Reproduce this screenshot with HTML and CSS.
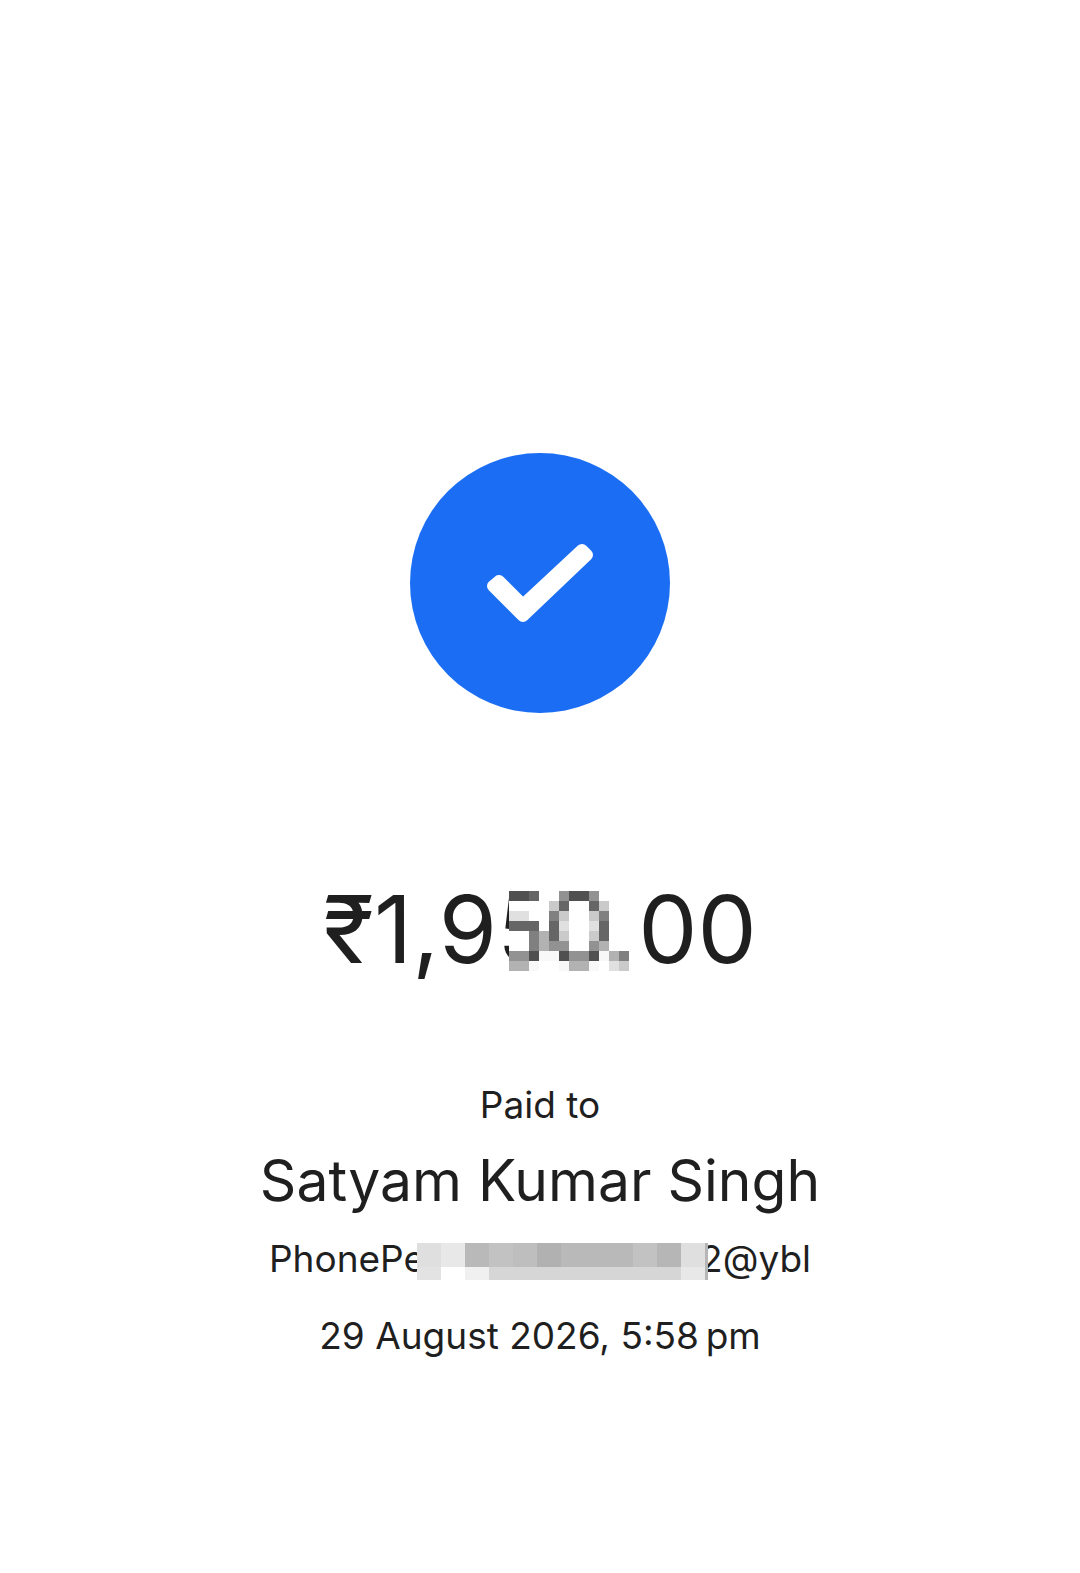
FILE: index.html
```html
<!DOCTYPE html>
<html lang="en">
<head>
  <meta charset="UTF-8" />
  <meta name="viewport" content="width=device-width, initial-scale=1.0"/>
  <title>Payment</title>
  <link rel="stylesheet" href="styles.css">
</head>
<body>
  <main class="receipt">
    <svg class="tick" viewBox="0 0 260 260" aria-hidden="true">
      <circle cx="130" cy="130" r="130" fill="#1b6ef3"/>
      <path d="M83 133L89 128L113 152L172 97L177 102L113 163Z" fill="#fff" stroke="#fff" stroke-width="12" stroke-linejoin="round"/>
    </svg>

    <h1 class="amount">
      ₹1,9<span class="masked">50.<svg class="amount-mask" viewBox="0 0 12 8" shape-rendering="crispEdges" aria-hidden="true">
        <path fill="#fff" d="M0 0h12v8h-12z"/>
        <path fill="#505050" d="M0 0h2v1h-2zM6 0h2v1h-2zM2 6h1v1h-1zM5 6h1v1h-1zM8 6h1v1h-1z"/>
        <path fill="#666" d="M2 0h1v1h-1zM5 1h1v1h-1zM8 1h1v1h-1zM0 3h3v1h-3zM4 3h1v2h-1zM9 3h1v2h-1z"/>
        <path fill="#808080" d="M4 2h1v1h-1zM9 2h1v1h-1zM2 4h1v2h-1zM11 6h1v1h-1z"/>
        <path fill="#929292" d="M5 0h1v1h-1zM8 0h1v1h-1zM4 5h2v1h-2zM8 5h1v1h-1zM0 6h2v1h-2zM6 6h2v1h-2z"/>
        <path fill="#b2b2b2" d="M3 4h1v2h-1zM9 5h1v1h-1zM10 6h1v1h-1zM0 7h2v1h-2zM6 7h2v1h-2z"/>
        <path fill="#cacaca" d="M4 1h1v1h-1zM9 1h1v1h-1zM5 2h1v1h-1zM8 2h1v1h-1zM5 4h1v1h-1zM8 4h1v1h-1zM11 7h1v1h-1z"/>
        <path fill="#e0e0e0" d="M0 2h2v1h-2zM5 3h1v1h-1zM8 3h1v1h-1zM10 7h1v1h-1z"/>
        <path fill="#f8f8f8" d="M3 6h2v1h-2zM9 6h1v1h-1zM2 7h1v1h-1zM5 7h1v1h-1zM8 7h1v1h-1z"/>
      </svg></span>00
    </h1>

    <p class="label">Paid to</p>
    <h2 class="name">Satyam Kumar Singh</h2>
    <p class="upi">
      <span>PhonePe</span>
      <svg class="upi-mask" viewBox="0 0 291 37" shape-rendering="crispEdges" aria-hidden="true">
        <path fill="#d6d6d6" d="M0 0h291v37h-291z"/>
        <path fill="#dfdfdf" d="M0 0h24v24h-24zM264 0h24v24h-24z"/>
        <path fill="#e8e8e8" d="M24 0h24v24h-24zM264 24h24v13h-24z"/>
        <path fill="#b9b9b9" d="M48 0h24v24h-24zM144 0h72v24h-72z"/>
        <path fill="#c2c2c2" d="M72 0h24v24h-24zM216 0h24v24h-24z"/>
        <path fill="#bebebe" d="M96 0h24v24h-24z"/>
        <path fill="#b1b1b1" d="M120 0h24v24h-24z"/>
        <path fill="#b6b6b6" d="M240 0h24v24h-24zM288 0h3v37h-3z"/>
        <path fill="#e3e3e3" d="M0 24h24v13h-24z"/>
        <path fill="#fff" d="M24 24h24v13h-24z"/>
        <path fill="#f0f0f0" d="M48 24h24v13h-24z"/>
      </svg>
      <span>2@ybl</span>
    </p>
    <p class="date">29 August 2026, 5:58&#8201;pm</p>
  </main>
</body>
</html>
```
FILE: styles.css
```css
body {
  margin: 0;
  background-color: #fff;
  color: #1f1f1f;
  font-family: Inter, "Open Sans", sans-serif;
}

.receipt {
  display: flex;
  flex-direction: column;
  align-items: center;
  padding: 453px 24px 200px;
  text-align: center;
}

h1, h2, p {
  margin: 0;
  font-weight: 400;
}

.tick {
  width: 260px;
  height: 260px;
}

.amount {
  margin-top: 156px;
  font-size: 94px;
  line-height: 120px;
}

.masked {
  position: relative;
}

/* pixelated block over the middle digits */
.amount-mask {
  position: absolute;
  left: 12px;
  top: 19px;
  width: 120px;
  height: 80px;
  padding-right: 6px;
  background: #fff;
}

.label, .upi, .date {
  font-size: 37px;
  line-height: 48px;
}

.label {
  margin-top: 92px;
}

.name {
  margin-top: 12px;
  font-size: 57px;
  line-height: 80px;
}

.upi {
  display: flex;
  align-items: flex-start;
  margin-top: 14px;
}

.upi-mask {
  width: 291px;
  height: 37px;
  margin: 8px -8px 0;
  z-index: 1;
}

.date {
  margin-top: 29px;
}
```
